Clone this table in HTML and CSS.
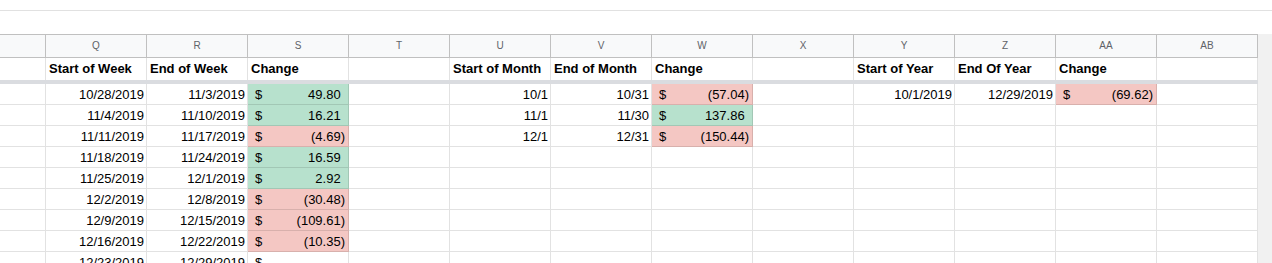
FILE: index.html
```html
<!DOCTYPE html>
<html>
<head>
<meta charset="utf-8">
<link rel="stylesheet" href="styles.css">
</head>
<body>
<div class="topbar"></div>
<div class="sheet">
  <div class="grid">
    <div class="row colhead">
      <div class="c"></div>
      <div class="c">Q</div><div class="c">R</div><div class="c">S</div><div class="c">T</div>
      <div class="c">U</div><div class="c">V</div><div class="c">W</div><div class="c">X</div>
      <div class="c">Y</div><div class="c">Z</div><div class="c">AA</div><div class="c">AB</div>
    </div>
    <div class="row head">
      <div class="c"></div>
      <div class="c">Start of Week</div><div class="c">End of Week</div><div class="c">Change</div><div class="c"></div>
      <div class="c">Start of Month</div><div class="c">End of Month</div><div class="c">Change</div><div class="c"></div>
      <div class="c">Start of Year</div><div class="c">End Of Year</div><div class="c">Change</div><div class="c"></div>
    </div>
    <div class="band"></div>

    <div class="row data">
      <div class="c"></div>
      <div class="c r">10/28/2019</div><div class="c r">11/3/2019</div>
      <div class="c acc pos"><span>$</span><span>49.80<i class="sp">)</i></span></div><div class="c"></div>
      <div class="c r">10/1</div><div class="c r">10/31</div>
      <div class="c acc neg"><span>$</span><span>(57.04)</span></div><div class="c"></div>
      <div class="c r">10/1/2019</div><div class="c r">12/29/2019</div>
      <div class="c acc neg"><span>$</span><span>(69.62)</span></div><div class="c"></div>
    </div>
    <div class="row data">
      <div class="c"></div>
      <div class="c r">11/4/2019</div><div class="c r">11/10/2019</div>
      <div class="c acc pos"><span>$</span><span>16.21<i class="sp">)</i></span></div><div class="c"></div>
      <div class="c r">11/1</div><div class="c r">11/30</div>
      <div class="c acc pos"><span>$</span><span>137.86<i class="sp">)</i></span></div><div class="c"></div>
      <div class="c"></div><div class="c"></div><div class="c"></div><div class="c"></div>
    </div>
    <div class="row data">
      <div class="c"></div>
      <div class="c r">11/11/2019</div><div class="c r">11/17/2019</div>
      <div class="c acc neg"><span>$</span><span>(4.69)</span></div><div class="c"></div>
      <div class="c r">12/1</div><div class="c r">12/31</div>
      <div class="c acc neg"><span>$</span><span>(150.44)</span></div><div class="c"></div>
      <div class="c"></div><div class="c"></div><div class="c"></div><div class="c"></div>
    </div>
    <div class="row data">
      <div class="c"></div>
      <div class="c r">11/18/2019</div><div class="c r">11/24/2019</div>
      <div class="c acc pos"><span>$</span><span>16.59<i class="sp">)</i></span></div><div class="c"></div>
      <div class="c"></div><div class="c"></div><div class="c"></div><div class="c"></div>
      <div class="c"></div><div class="c"></div><div class="c"></div><div class="c"></div>
    </div>
    <div class="row data">
      <div class="c"></div>
      <div class="c r">11/25/2019</div><div class="c r">12/1/2019</div>
      <div class="c acc pos"><span>$</span><span>2.92<i class="sp">)</i></span></div><div class="c"></div>
      <div class="c"></div><div class="c"></div><div class="c"></div><div class="c"></div>
      <div class="c"></div><div class="c"></div><div class="c"></div><div class="c"></div>
    </div>
    <div class="row data">
      <div class="c"></div>
      <div class="c r">12/2/2019</div><div class="c r">12/8/2019</div>
      <div class="c acc neg"><span>$</span><span>(30.48)</span></div><div class="c"></div>
      <div class="c"></div><div class="c"></div><div class="c"></div><div class="c"></div>
      <div class="c"></div><div class="c"></div><div class="c"></div><div class="c"></div>
    </div>
    <div class="row data">
      <div class="c"></div>
      <div class="c r">12/9/2019</div><div class="c r">12/15/2019</div>
      <div class="c acc neg"><span>$</span><span>(109.61)</span></div><div class="c"></div>
      <div class="c"></div><div class="c"></div><div class="c"></div><div class="c"></div>
      <div class="c"></div><div class="c"></div><div class="c"></div><div class="c"></div>
    </div>
    <div class="row data">
      <div class="c"></div>
      <div class="c r">12/16/2019</div><div class="c r">12/22/2019</div>
      <div class="c acc neg"><span>$</span><span>(10.35)</span></div><div class="c"></div>
      <div class="c"></div><div class="c"></div><div class="c"></div><div class="c"></div>
      <div class="c"></div><div class="c"></div><div class="c"></div><div class="c"></div>
    </div>
    <div class="row data">
      <div class="c"></div>
      <div class="c r">12/23/2019</div><div class="c r">12/29/2019</div>
      <div class="c acc"><span>$</span><span></span></div><div class="c"></div>
      <div class="c"></div><div class="c"></div><div class="c"></div><div class="c"></div>
      <div class="c"></div><div class="c"></div><div class="c"></div><div class="c"></div>
    </div>
  </div>
  <div class="filler"></div>
</div>
</body>
</html>
```

FILE: styles.css
```css
html, body {
  margin: 0;
  padding: 0;
  background: #fff;
  overflow: hidden;
  height: 263px;
}
body {
  font-family: "Liberation Sans", Arial, sans-serif;
  font-size: 13px;
  color: #000;
}
.topbar {
  height: 10px;
  border-bottom: 1px solid #e1e1e1;
  margin-bottom: 23px;
}
.sheet {
  display: flex;
  height: 229px;
  overflow: hidden;
}
.grid {
  width: 1258px;
  flex: none;
}
.filler {
  flex: 1;
  background: #f1f1f1;
}
.row {
  display: grid;
  grid-template-columns: 46px repeat(12, 101px);
}
.c {
  box-sizing: border-box;
  border-right: 1px solid rgba(0, 0, 0, 0.115);
  white-space: nowrap;
  overflow: hidden;
  padding: 3px 3px 0 3px;
  line-height: 16px;
}
.colhead .c {
  height: 24px;
  background: #f8f9fa;
  border-top: 1px solid #c0c0c0;
  border-bottom: 1px solid #c0c0c0;
  border-right-color: #c0c0c0;
  padding: 0;
  line-height: 22px;
  font-size: 10px;
  color: #5f6368;
  text-align: center;
}
.head .c {
  height: 22px;
  font-weight: bold;
}
.band {
  height: 4px;
  background: #dadce0;
}
.data .c {
  height: 21px;
  border-bottom: 1px solid rgba(0, 0, 0, 0.115);
}
.r {
  text-align: right;
  padding-right: 2px;
}
.acc {
  display: flex;
  justify-content: space-between;
  padding-left: 7px;
}
.sp {
  font-style: normal;
  visibility: hidden;
}
.pos {
  background: #b7e1cd;
}
.neg {
  background: #f4c7c3;
}
```
